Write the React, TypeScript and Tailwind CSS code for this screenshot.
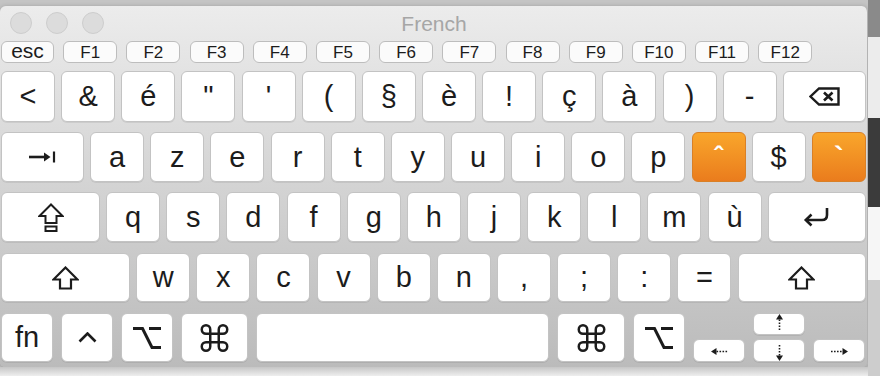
import React from "react";

const KEY =
  "flex items-center justify-center shrink-0 rounded-[6px] border border-[#c3c3c3] bg-white shadow-[0_1px_0_rgba(0,0,0,0.07)] text-[29px] leading-none text-[#1c1c1c]";
const FKEY =
  "flex items-center justify-center shrink-0 rounded-[6px] border border-[#bdbdbd] bg-[#fbfbfb] text-[17px] leading-none text-[#1c1c1c] h-[22px]";
const ORANGE =
  "flex items-center justify-center shrink-0 rounded-[6px] border border-[#d98027] bg-linear-to-b from-[#f9a62b] to-[#ea7c1d] text-[29px] leading-none text-white w-[54px]";

const ink = "#1c1c1c";

function Backspace() {
  return (
    <svg width="31" height="19" viewBox="0 0 31 19" fill="none">
      <path d="M10 1.5H29.5V17.5H10L1.5 9.5Z" stroke={ink} strokeWidth="2.4" />
      <path d="M15 5.5L23.5 13.5M23.5 5.5L15 13.5" stroke={ink} strokeWidth="2.6" />
    </svg>
  );
}

function Tab() {
  return (
    <svg width="27" height="12" viewBox="0 0 27 12" fill="none">
      <path d="M0 6H17" stroke={ink} strokeWidth="2.6" />
      <path d="M15 1.5L21.5 6L15 10.5Z" fill={ink} />
      <path d="M25 0.5V11.5" stroke={ink} strokeWidth="2.2" />
    </svg>
  );
}

function CapsLock() {
  return (
    <svg width="26" height="29" viewBox="0 0 26 29" fill="none">
      <path d="M13 1.5L24.5 13H18.5V20H7.5V13H1.5Z" stroke={ink} strokeWidth="2" strokeLinejoin="miter" />
      <rect x="7.5" y="23.5" width="11" height="4.5" stroke={ink} strokeWidth="2" />
    </svg>
  );
}

function Shift() {
  return (
    <svg width="27" height="24" viewBox="0 0 27 24" fill="none">
      <path d="M13.5 1.5L25.5 13.5H19V22.5H8V13.5H1.5Z" stroke={ink} strokeWidth="2.2" />
    </svg>
  );
}

function Return() {
  return (
    <svg width="27" height="19" viewBox="0 0 27 19" fill="none">
      <path d="M24 0V7Q24 12 19 12H3" stroke={ink} strokeWidth="2.6" />
      <path d="M8.5 6.5L2.8 12L8.5 17.5" stroke={ink} strokeWidth="2.6" />
    </svg>
  );
}

function Chevron() {
  return (
    <svg width="19" height="11" viewBox="0 0 19 11" fill="none">
      <path d="M1.5 9.5L9.5 1.5L17.5 9.5" stroke={ink} strokeWidth="2.6" />
    </svg>
  );
}

function OptionIcon() {
  return (
    <svg width="28" height="24" viewBox="0 0 28 24" fill="none">
      <path d="M0 2.5H9.5L19 21.5H28M16 2.5H28" stroke={ink} strokeWidth="3" />
    </svg>
  );
}

function CommandIcon() {
  return (
    <svg width="35" height="34" viewBox="0 0 24 24" fill="none">
      <path
        d="M15 6v12a3 3 0 1 0 3-3H6a3 3 0 1 0 3 3V6a3 3 0 1 0-3 3h12a3 3 0 1 0-3-3"
        stroke={ink}
        strokeWidth="1.75"
      />
    </svg>
  );
}

function ArrowH({ dir }: { dir: "l" | "r" }) {
  return (
    <svg width="17" height="9" viewBox="0 0 17 9" fill="none">
      {dir === "l" ? (
        <>
          <path d="M0 4.5L5.5 1V8Z" fill={ink} />
          <path d="M5.5 4.5H17" stroke={ink} strokeWidth="1.6" strokeDasharray="1.6 1.4" />
        </>
      ) : (
        <>
          <path d="M17 4.5L11.5 1V8Z" fill={ink} />
          <path d="M0 4.5H11.5" stroke={ink} strokeWidth="1.6" strokeDasharray="1.6 1.4" />
        </>
      )}
    </svg>
  );
}

function ArrowV({ dir }: { dir: "u" | "d" }) {
  return (
    <svg width="9" height="16" viewBox="0 0 9 16" fill="none">
      {dir === "u" ? (
        <>
          <path d="M4.5 0L1 5.5H8Z" fill={ink} />
          <path d="M4.5 5.5V16" stroke={ink} strokeWidth="1.6" strokeDasharray="1.6 1.4" />
        </>
      ) : (
        <>
          <path d="M4.5 16L1 10.5H8Z" fill={ink} />
          <path d="M4.5 0V10.5" stroke={ink} strokeWidth="1.6" strokeDasharray="1.6 1.4" />
        </>
      )}
    </svg>
  );
}

const row1 = ["<", "&", "é", '"', "'", "(", "§", "è", "!", "ç", "à", ")", "-"];
const row2 = ["a", "z", "e", "r", "t", "y", "u", "i", "o", "p"];
const row3 = ["q", "s", "d", "f", "g", "h", "j", "k", "l", "m", "ù"];
const row4 = ["w", "x", "c", "v", "b", "n", ",", ";", ":", "="];
const fkeys = ["F1", "F2", "F3", "F4", "F5", "F6", "F7", "F8", "F9", "F10", "F11", "F12"];

export default function App() {
  return (
    <div className="w-[880px] h-[376px] flex overflow-hidden bg-[#efefef] font-['Liberation_Sans',Arial,sans-serif]">
      <div className="w-[868px] shrink-0 flex flex-col bg-[#c4c4c4]">
        <div className="h-[6px] shrink-0 bg-[#c4c4c4]" />
        <div className="h-[361px] shrink-0 rounded-t-[6px] rounded-b-[5px] bg-linear-to-b from-[#ececec] to-[#bbbbbb] pl-[1px] flex flex-col border-r border-[#b3b3b3] shadow-[0_1px_5px_rgba(0,0,0,0.25)]">
          {/* title bar */}
          <div className="h-[33px] shrink-0 grid grid-cols-[1fr_auto_1fr] items-center">
            <div className="flex gap-[14px] pl-[9px]">
              <div className="w-[22px] h-[22px] rounded-full bg-[#dcdcdc] border border-[#cdcdcd]" />
              <div className="w-[22px] h-[22px] rounded-full bg-[#dcdcdc] border border-[#cdcdcd]" />
              <div className="w-[22px] h-[22px] rounded-full bg-[#dcdcdc] border border-[#cdcdcd]" />
            </div>
            <div className="text-[21px] leading-none text-[#a6a6a6] pt-[1px]">French</div>
            <div />
          </div>
          {/* function row */}
          <div className="mt-[2px] flex gap-[9.2px]">
            <div className={`${FKEY} w-[53px]`}>
              <span className="text-[21px] mb-[4px]">esc</span>
            </div>
            {fkeys.map((f) => (
              <div key={f} className={`${FKEY} w-[54px]`}>
                {f}
              </div>
            ))}
          </div>
          {/* number row */}
          <div className="mt-[8px] h-[51px] flex gap-[6.15px]">
            {row1.map((k) => (
              <div key={k} className={`${KEY} w-[54px]`}>
                {k}
              </div>
            ))}
            <div className={`${KEY} w-[83px]`}>
              <Backspace />
            </div>
          </div>
          {/* tab row */}
          <div className="mt-[10px] h-[50px] flex gap-[6.15px]">
            <div className={`${KEY} w-[83px]`}>
              <Tab />
            </div>
            {row2.map((k) => (
              <div key={k} className={`${KEY} w-[54px]`}>
                {k}
              </div>
            ))}
            <div className={ORANGE}>
              <span className="font-bold text-[27px]">ˆ</span>
            </div>
            <div className={`${KEY} w-[54px]`}>$</div>
            <div className={ORANGE}>
              <span className="font-bold">`</span>
            </div>
          </div>
          {/* caps row */}
          <div className="mt-[10px] h-[50px] flex gap-[6.15px]">
            <div className={`${KEY} w-[99px]`}>
              <CapsLock />
            </div>
            {row3.map((k) => (
              <div key={k} className={`${KEY} w-[54px]`}>
                {k}
              </div>
            ))}
            <div className={`${KEY} w-[98px]`}>
              <Return />
            </div>
          </div>
          {/* shift row */}
          <div className="mt-[11px] h-[49px] flex gap-[6.15px]">
            <div className={`${KEY} w-[129px]`}>
              <Shift />
            </div>
            {row4.map((k) => (
              <div key={k} className={`${KEY} w-[54px]`}>
                {k}
              </div>
            ))}
            <div className={`${KEY} w-[128px]`}>
              <Shift />
            </div>
          </div>
          {/* bottom row */}
          <div className="mt-[11px] h-[49px] flex gap-[8px]">
            <div className={`${KEY} w-[52px]`}>fn</div>
            <div className={`${KEY} w-[52px]`}>
              <Chevron />
            </div>
            <div className={`${KEY} w-[52px]`}>
              <OptionIcon />
            </div>
            <div className={`${KEY} w-[67px]`}>
              <CommandIcon />
            </div>
            <div className={`${KEY} w-[293px]`} />
            <div className={`${KEY} w-[68px]`}>
              <CommandIcon />
            </div>
            <div className={`${KEY} w-[52px]`}>
              <OptionIcon />
            </div>
            <div className="flex gap-[8px] h-[49px]">
              <div className={`${KEY} w-[52px] h-[23px] self-end items-end pb-[5px]`}>
                <ArrowH dir="l" />
              </div>
              <div className="flex flex-col gap-[4px] w-[52px]">
                <div className={`${KEY} w-[52px] h-[22px] items-start pt-[0px]`}>
                  <ArrowV dir="u" />
                </div>
                <div className={`${KEY} w-[52px] h-[23px] items-end pb-[0px]`}>
                  <ArrowV dir="d" />
                </div>
              </div>
              <div className={`${KEY} w-[52px] h-[23px] self-end items-end pb-[5px]`}>
                <ArrowH dir="r" />
              </div>
            </div>
          </div>
        </div>
        <div className="flex-1 bg-linear-to-b from-[#c6c6c6] to-[#eeeeee]" />
      </div>
      <div className="w-[12px] shrink-0 flex flex-col">
        <div className="h-[37px] bg-[#8a8a8a]" />
        <div className="h-[81px] bg-[#ececec]" />
        <div className="h-[89px] bg-[#3b3b3b]" />
        <div className="h-[73px] bg-[#f6f6f6]" />
        <div className="flex-1 bg-[#cdcdcd]" />
      </div>
    </div>
  );
}
